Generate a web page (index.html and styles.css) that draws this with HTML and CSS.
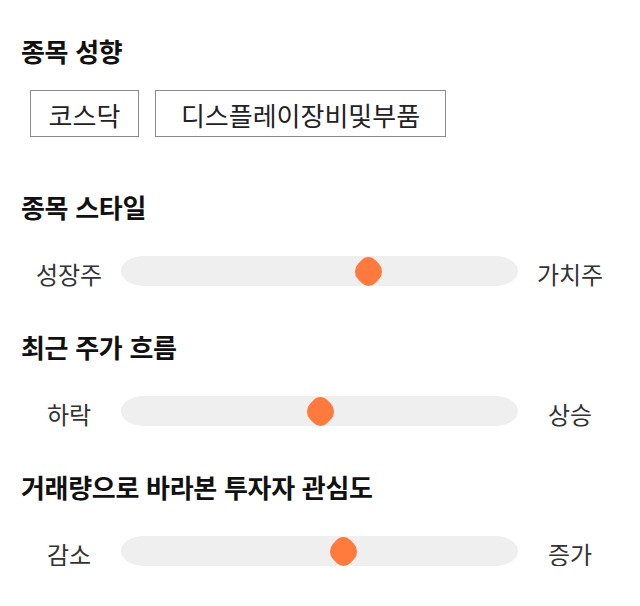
FILE: index.html
```html
<!DOCTYPE html>
<html lang="ko">
<head>
<meta charset="utf-8">
<link rel="stylesheet" href="styles.css">
</head>
<body>
<div class="page">
  <section class="sec sec-first">
    <h2 class="title">종목 성향</h2>
    <div class="chips">
      <span class="chip chip-a">코스닥</span>
      <span class="chip chip-b">디스플레이장비및부품</span>
    </div>
  </section>
  <section class="sec">
    <h2 class="title">종목 스타일</h2>
    <div class="slider">
      <span class="lbl">성장주</span>
      <div class="track"><span class="thumb" style="left:62.3%"></span></div>
      <span class="lbl">가치주</span>
    </div>
  </section>
  <section class="sec">
    <h2 class="title">최근 주가 흐름</h2>
    <div class="slider">
      <span class="lbl">하락</span>
      <div class="track"><span class="thumb" style="left:50.3%"></span></div>
      <span class="lbl">상승</span>
    </div>
  </section>
  <section class="sec">
    <h2 class="title">거래량으로 바라본 투자자 관심도</h2>
    <div class="slider">
      <span class="lbl">감소</span>
      <div class="track"><span class="thumb" style="left:56%"></span></div>
      <span class="lbl">증가</span>
    </div>
  </section>
</div>
</body>
</html>
```
FILE: styles.css
```css
html, body {
  margin: 0;
  padding: 0;
  background: #ffffff;
}
body {
  font-family: "Noto Sans CJK KR", "Noto Sans", sans-serif;
  color: #222;
}
.page {
  padding: 36px 22px 0 21px;
}
.sec {
  margin-top: 55px;
}
.sec + .sec + .sec {
  margin-top: 46px;
}
.sec-first {
  margin-top: 0;
}
.title {
  margin: 0;
  font-size: 26px;
  line-height: 30px;
  font-weight: 700;
  color: #111;
  letter-spacing: -0.3px;
}
.chips {
  display: flex;
  gap: 16px;
  margin-top: 24px;
  padding-left: 9px;
}
.chip {
  display: flex;
  align-items: center;
  justify-content: center;
  height: 47px;
  box-sizing: border-box;
  border: 1px solid #8a8a8a;
  font-size: 26px;
  color: #222;
  padding-top: 2px;
}
.chip-a {
  width: 109px;
}
.chip-b {
  width: 291px;
}
.slider {
  display: grid;
  grid-template-columns: 96px 1fr 96px;
  column-gap: 4px;
  align-items: center;
  margin-top: 34px;
  height: 30px;
}
.lbl {
  text-align: center;
  font-size: 24px;
  line-height: 30px;
  color: #333;
  position: relative;
  top: 3px;
}
.track {
  position: relative;
  height: 30px;
  background: #efefef;
  border-radius: 22px / 15px;
}
.thumb {
  position: absolute;
  top: 50%;
  width: 25px;
  height: 25px;
  margin-left: -12.5px;
  margin-top: -12.5px;
  background: #ff7a3c;
  border-radius: 10px;
  transform: scale(1, 1.07) rotate(45deg);
}
```
